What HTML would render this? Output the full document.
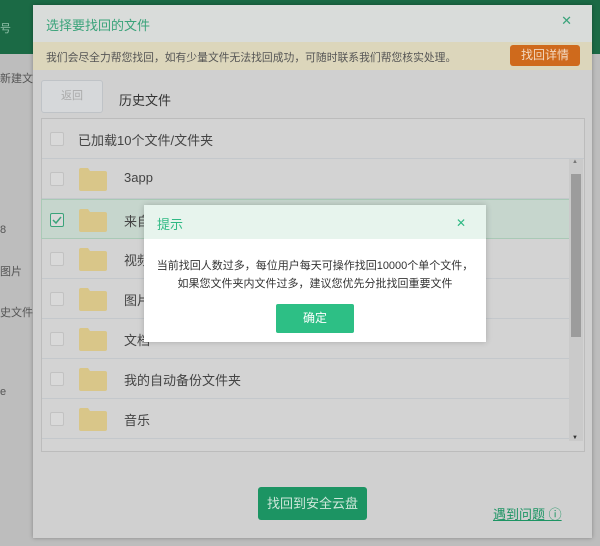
<!DOCTYPE html>
<html><head><meta charset="utf-8"><style>
*{margin:0;padding:0;box-sizing:border-box}
body{width:600px;height:546px;overflow:hidden;position:relative;background:#bdbdbd;font-family:"Liberation Sans","Noto Sans CJK SC",sans-serif;font-size:12px;color:#333}
.a{position:absolute}
.top{left:0;top:0;width:600px;height:54px;background:#1b6a45}
.side{color:#555;font-size:11px}
.dlg{left:33px;top:5px;width:559px;height:533px;background:#d0d0d0;box-shadow:0 0 4px rgba(0,0,0,.3)}
.hd{left:0;top:0;width:559px;height:37px;background:#d9dcda;color:#3aa37a;font-size:13px;padding:10px 13px}
.yb{left:0;top:37px;width:559px;height:28px;background:#dcd6bb;color:#555;font-size:10.8px;padding:7px 13px;white-space:nowrap}
.ob{left:477px;top:40px;width:70px;height:21px;background:#cf6a1c;border-radius:3px;color:#f3d8c0;text-align:center;line-height:21px;font-size:12px}
.back{left:8px;top:75px;width:62px;height:33px;border:1px solid #bfc3c7;background:#d6d8da;border-radius:3px;color:#aaa;text-align:center;line-height:31px;font-size:11px}
.list{left:8px;top:113px;width:544px;height:334px;border:1px solid #bcbcbc;background:#d3d3d3}
.row{position:absolute;left:0;width:527px;height:40px;border-bottom:1px solid #c4c8cc;font-size:13px;color:#444}
.cb{position:absolute;left:8px;top:13px;width:14px;height:14px;border:1px solid #c2c2c2;background:#d9d9d9;border-radius:2px}
.fd{position:absolute;left:36px;top:8px;width:29px;height:24px}
.rt{position:absolute;left:82px;top:11px}
.sb{left:527px;top:40px;width:14px;height:282px;background:#cacaca}
.m{left:144px;top:205px;width:342px;height:137px;background:#fff;box-shadow:0 0 6px rgba(0,0,0,.2)}
.mh{left:0;top:0;width:342px;height:34px;background:#e7f4ed;color:#2fb984;font-size:13px;padding:9px 13px}
</style></head><body>
<div class="a top"></div>
<div class="a side" style="left:0;top:20px;color:#8fc0a8">号</div>
<div class="a side" style="left:0;top:70px">新建文</div>
<div class="a side" style="left:0;top:224px">8</div>
<div class="a side" style="left:0;top:263px">图片</div>
<div class="a side" style="left:0;top:304px">史文件</div>
<div class="a side" style="left:0;top:386px">e</div>
<div class="a dlg">
 <div class="a hd">选择要找回的文件<span style="position:absolute;right:20px;top:8px;color:#3aa37a">✕</span></div>
 <div class="a yb">我们会尽全力帮您找回，如有少量文件无法找回成功，可随时联系我们帮您核实处理。</div>
 <div class="a ob">找回详情</div>
 <div class="a back">返回</div>
 <div class="a" style="left:86px;top:85px;font-size:13px;color:#333">历史文件</div>
 <div class="a list">
  <div class="row" style="top:0;width:542px"><div class="cb"></div><span class="rt" style="left:36px">已加载10个文件/文件夹</span></div>
  <div class="row" style="top:40px"><div class="cb"></div><svg class="fd" viewBox="0 0 29 24"><path d="M1 3a2 2 0 0 1 2-2h7l2 3h15a2 2 0 0 1 2 2v16a2 2 0 0 1-2 2H3a2 2 0 0 1-2-2z" fill="#d9c689"/></svg><span class="rt">3app</span></div>
  <div class="row" style="top:80px;background:#c6d6cd;border:1px solid #a9c9b6;left:-1px;width:529px"><div class="cb" style="border-color:#3aa37a"><svg width="12" height="12" viewBox="0 0 12 12"><path d="M2 6l3 3 5-6" stroke="#3aa37a" stroke-width="1.5" fill="none"/></svg></div><svg class="fd" viewBox="0 0 29 24"><path d="M1 3a2 2 0 0 1 2-2h7l2 3h15a2 2 0 0 1 2 2v16a2 2 0 0 1-2 2H3a2 2 0 0 1-2-2z" fill="#d9c689"/></svg><span class="rt">来自</span></div>
  <div class="row" style="top:120px"><div class="cb"></div><svg class="fd" viewBox="0 0 29 24"><path d="M1 3a2 2 0 0 1 2-2h7l2 3h15a2 2 0 0 1 2 2v16a2 2 0 0 1-2 2H3a2 2 0 0 1-2-2z" fill="#d9c689"/></svg><span class="rt">视频</span></div>
  <div class="row" style="top:160px"><div class="cb"></div><svg class="fd" viewBox="0 0 29 24"><path d="M1 3a2 2 0 0 1 2-2h7l2 3h15a2 2 0 0 1 2 2v16a2 2 0 0 1-2 2H3a2 2 0 0 1-2-2z" fill="#d9c689"/></svg><span class="rt">图片</span></div>
  <div class="row" style="top:200px"><div class="cb"></div><svg class="fd" viewBox="0 0 29 24"><path d="M1 3a2 2 0 0 1 2-2h7l2 3h15a2 2 0 0 1 2 2v16a2 2 0 0 1-2 2H3a2 2 0 0 1-2-2z" fill="#d9c689"/></svg><span class="rt">文档</span></div>
  <div class="row" style="top:240px"><div class="cb"></div><svg class="fd" viewBox="0 0 29 24"><path d="M1 3a2 2 0 0 1 2-2h7l2 3h15a2 2 0 0 1 2 2v16a2 2 0 0 1-2 2H3a2 2 0 0 1-2-2z" fill="#d9c689"/></svg><span class="rt">我的自动备份文件夹</span></div>
  <div class="row" style="top:280px"><div class="cb"></div><svg class="fd" viewBox="0 0 29 24"><path d="M1 3a2 2 0 0 1 2-2h7l2 3h15a2 2 0 0 1 2 2v16a2 2 0 0 1-2 2H3a2 2 0 0 1-2-2z" fill="#d9c689"/></svg><span class="rt">音乐</span></div>
  <div class="a sb"><div class="a" style="left:2px;top:15px;width:10px;height:163px;background:#9c9c9c"></div><div class="a" style="left:3px;top:0;font-size:6px;color:#777">▲</div><div class="a" style="left:3px;bottom:0;font-size:6px;color:#333">▼</div></div>
 </div>
 <div class="a" style="left:225px;top:482px;width:109px;height:33px;background:#1c9463;border-radius:3px;color:#cfe7db;text-align:center;line-height:33px;font-size:13px">找回到安全云盘</div>
 <div class="a" style="left:460px;top:499px;color:#1c9463;font-size:13px;text-decoration:underline">遇到问题 ⓘ</div>
</div>
<div class="a m">
 <div class="a mh">提示<span style="position:absolute;right:20px;top:11px;font-size:12px">✕</span></div>
 <div class="a" style="left:0;top:52px;width:342px;text-align:center;font-size:11px;line-height:18px;color:#333">当前找回人数过多，每位用户每天可操作找回10000个单个文件，<br>如果您文件夹内文件过多，建议您优先分批找回重要文件</div>
 <div class="a" style="left:132px;top:99px;width:78px;height:29px;background:#2dbf85;border-radius:2px;color:#fff;text-align:center;line-height:29px;font-size:12px">确定</div>
</div>
</body></html>
